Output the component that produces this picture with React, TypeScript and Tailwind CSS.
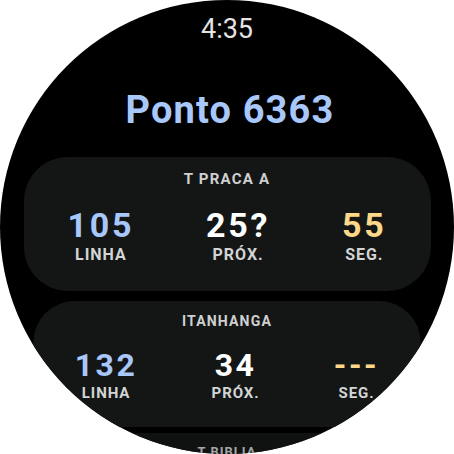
import React from 'react';

// ── Data ─────────────────────────────────────────────────────────────────────
type Arrival = { stop: string; line: string; next: string; secs: string };

const ARRIVALS: Arrival[] = [
  { stop: 'T PRACA A', line: '105', next: '25?', secs: '55' },
  { stop: 'ITANHANGA', line: '132', next: '34', secs: '---' },
  { stop: 'T BIBLIA', line: '201', next: '12', secs: '40' },
];

// Wear OS style list scaling, written out per position
const CARD_TRANSFORM = [
  'w-[407px]',
  'w-[412px] mt-[10px] origin-top scale-[0.94]',
  'w-[412px] -mt-[2px] origin-top scale-[0.86] opacity-80',
];

function ArrivalCard({ a, idx }: { a: Arrival; idx: number }) {
  return (
    <div className={`shrink-0 rounded-[44px] bg-[#141616] pt-[15px] pb-[28px] ${CARD_TRANSFORM[idx]}`}>
      <div className="text-center text-[15px] leading-none font-bold tracking-[0.08em] text-[#cfd0d0]">
        {a.stop}
      </div>
      <div className="mt-[21px] flex items-start justify-between pl-[44px] pr-[44px]">
        <Stat value={a.line} label="LINHA" valueClass="text-[#a8c7fa]" />
        <Stat value={a.next} label="PRÓX." valueClass="text-white" />
        <Stat value={a.secs} label="SEG." valueClass="text-[#fdd889]" />
      </div>
    </div>
  );
}

function Stat({ value, label, valueClass }: { value: string; label: string; valueClass: string }) {
  return (
    <div className="flex flex-col items-center">
      <span className={`text-[34px] leading-none font-bold tracking-[0.08em] ${valueClass}`}>{value}</span>
      <span className="mt-[5px] text-[16px] leading-none font-bold tracking-[0.06em] text-[#d3d4d4]">{label}</span>
    </div>
  );
}

export default function App() {
  return (
    <div className="w-[454px] h-[454px] bg-white font-['Roboto',sans-serif]">
      <div className="w-[454px] h-[454px] rounded-full bg-black overflow-hidden flex flex-col items-center">

        {/* ── Clock ─────────────────────────────────────────────────── */}
        <div className="mt-[16px] text-[27px] leading-none text-[#e3e3e3]">4:35</div>

        {/* ── Stop title ────────────────────────────────────────────── */}
        <div className="mt-[48px] ml-[6px] text-[38px] leading-none font-bold tracking-[0.03em] text-[#a8c7fa]">Ponto 6363</div>

        {/* ── Arrivals list ─────────────────────────────────────────── */}
        <div className="mt-[28px] flex flex-col items-center">
          {ARRIVALS.map((a, i) => (
            <ArrivalCard key={a.stop} a={a} idx={i} />
          ))}
        </div>
      </div>
    </div>
  );
}
